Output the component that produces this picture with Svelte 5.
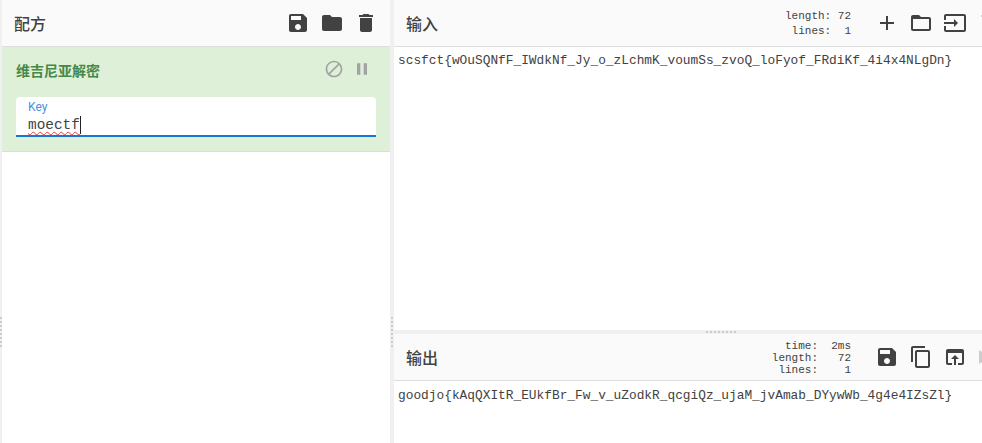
<script>
  const icons = {
    save: "M17 3H5c-1.11 0-2 .9-2 2v14c0 1.1.89 2 2 2h14c1.1 0 2-.9 2-2V7l-4-4zm-5 16c-1.66 0-3-1.34-3-3s1.34-3 3-3 3 1.34 3 3-1.34 3-3 3zm3-10H5V5h10v4z",
    folder: "M10 4H4c-1.1 0-1.99.9-1.99 2L2 18c0 1.1.9 2 2 2h16c1.1 0 2-.9 2-2V8c0-1.1-.9-2-2-2h-8l-2-2z",
    trash: "M6 19c0 1.1.9 2 2 2h8c1.1 0 2-.9 2-2V7H6v12zM19 4h-3.5l-1-1h-5l-1 1H5v2h14V4z",
    add: "M19 13h-6v6h-2v-6H5v-2h6V5h2v6h6v2z",
    folderOpen: "M20 6h-8l-2-2H4c-1.1 0-1.99.9-1.99 2L2 18c0 1.1.9 2 2 2h16c1.1 0 2-.9 2-2V8c0-1.1-.9-2-2-2zm0 12H4V8h16v10z",
    input: "M21 3.01H3c-1.1 0-2 .9-2 2V9h2V4.99h18v14.03H3V15H1v4.01c0 1.1.9 1.98 2 1.98h18c1.1 0 2-.88 2-1.98v-14c0-1.11-.9-2-2-2zM11 16l4-4-4-4v3H1v2h10v3z",
    copy: "M16 1H4c-1.1 0-2 .9-2 2v14h2V3h12V1zm3 4H8c-1.1 0-2 .9-2 2v14c0 1.1.9 2 2 2h11c1.1 0 2-.9 2-2V7c0-1.1-.9-2-2-2zm0 16H8V7h11v14z",
    open: "M19 4H5c-1.11 0-2 .9-2 2v12c0 1.1.89 2 2 2h4v-2H5V8h14v10h-4v2h4c1.1 0 2-.9 2-2V6c0-1.1-.89-2-2-2zm-7 6l-4 4h3v6h2v-6h3l-4-4z",
    block: "M12 2C6.48 2 2 6.48 2 12s4.48 10 10 10 10-4.48 10-10S17.52 2 12 2zM4 12c0-4.42 3.58-8 8-8 1.85 0 3.55.63 4.9 1.69L5.69 16.9C4.63 15.55 4 13.85 4 12zm8 8c-1.85 0-3.55-.63-4.9-1.69L18.31 7.1C19.37 8.45 20 10.15 20 12c0 4.42-3.58 8-8 8z",
    pause: "M6 19h4V5H6v14zm8-14v14h4V5h-4z",
    clear: "M4 4h15v2H4z",
    next: "M2 5v14l11-7z"
  };

  const inputText = "scsfct{wOuSQNfF_IWdkNf_Jy_o_zLchmK_voumSs_zvoQ_loFyof_FRdiKf_4i4x4NLgDn}";
  const outputText = "goodjo{kAqQXItR_EUkfBr_Fw_v_uZodkR_qcgiQz_ujaM_jvAmab_DYywWb_4g4e4IZsZl}";
</script>

{#snippet icon(name, extra = "")}
  <button class="icon-btn {extra}" aria-label={name}>
    <svg viewBox="0 0 24 24" width="24" height="24"><path d={icons[name]} /></svg>
  </button>
{/snippet}

<div class="app">
  <div class="gutter"></div>

  <section class="recipe">
    <header class="bar">
      <h2>配方</h2>
      <div class="buttons">
        {@render icon("save")}
        {@render icon("folder")}
        {@render icon("trash")}
      </div>
    </header>

    <div class="operation">
      <div class="op-head">
        <span class="op-name">维吉尼亚解密</span>
        <div class="op-icons">
          <svg viewBox="0 0 24 24" width="20" height="20"><path d={icons.block} /></svg>
          <svg viewBox="0 0 24 24" width="20" height="20"><path d={icons.pause} /></svg>
        </div>
      </div>
      <div class="field">
        <span class="field-label">Key</span>
        <div class="field-value"><span class="typo">moectf</span><span class="caret"></span></div>
      </div>
    </div>
  </section>

  <div class="gutter"></div>

  <section class="io">
    <div class="pane">
      <header class="bar">
        <h2>输入</h2>
        <pre class="stats in">length: 72
 lines:  1</pre>
        <div class="buttons">
          {@render icon("add")}
          {@render icon("folderOpen")}
          {@render icon("input")}
          {@render icon("clear", "muted")}
        </div>
      </header>
      <div class="text">{inputText}</div>
    </div>

    <div class="h-gutter"></div>

    <div class="pane output">
      <header class="bar">
        <h2>输出</h2>
        <pre class="stats">  time:  2ms
length:   72
 lines:    1</pre>
        <div class="buttons">
          {@render icon("save")}
          {@render icon("copy")}
          {@render icon("open")}
          {@render icon("next", "muted")}
        </div>
      </header>
      <div class="text">{outputText}</div>
    </div>
  </section>
</div>

<style>
  :global(body) {
    margin: 0;
    background: #fff;
    font-family: "Noto Sans CJK SC", "Noto Sans", sans-serif;
  }
  .app {
    display: grid;
    grid-template-columns: 2px 388px 4px 1fr;
    width: 982px;
    height: 443px;
    overflow: hidden;
  }
  .gutter {
    background-color: #f0f0f0;
    background-image: repeating-linear-gradient(to bottom, #ccc 0 2px, transparent 2px 4px);
    background-size: 2px 30px;
    background-position: left 0 top 317px;
    background-repeat: no-repeat;
  }
  .gutter:nth-child(3) {
    background-position: left 1px top 317px;
  }
  .recipe,
  .pane {
    display: flex;
    flex-direction: column;
    min-width: 0;
    overflow: hidden;
  }
  .bar {
    display: flex;
    align-items: center;
    flex: none;
    box-sizing: border-box;
    height: 47px;
    padding-left: 12px;
    background: #fafafa;
    border-bottom: 1px solid #ddd;
  }
  h2 {
    margin: 0;
    font-size: 16px;
    font-weight: 500;
    color: #424242;
    line-height: 24px;
  }
  .buttons {
    display: flex;
    flex: none;
    margin-left: auto;
    margin-right: 7px;
  }
  .stats + .buttons {
    margin-left: 19px;
    margin-right: -24px;
  }
  .icon-btn {
    flex: none;
    display: flex;
    align-items: center;
    justify-content: center;
    width: 34px;
    height: 34px;
    padding: 0;
    border: none;
    background: none;
  }
  .icon-btn path {
    fill: #424242;
  }
  .icon-btn.muted path {
    fill: #ccc;
  }
  .stats {
    margin: 2px 0 0 auto;
    font-family: "Liberation Mono", monospace;
    font-size: 11px;
    line-height: 12px;
    color: #424242;
    white-space: pre;
  }
  .stats.in {
    margin-top: 1px;
    line-height: 15px;
  }
  .operation {
    box-sizing: border-box;
    height: 105px;
    padding: 0 14px;
    background: #dff0d8;
    border-bottom: 1px solid #d3e6cb;
  }
  .op-head {
    display: flex;
    align-items: center;
    justify-content: space-between;
    box-sizing: border-box;
    height: 50px;
    padding-bottom: 4px;
  }
  .op-name {
    font-size: 14px;
    font-weight: 700;
    color: #468847;
  }
  .op-icons {
    display: flex;
    gap: 8px;
    margin: 0 4px 2px 0;
  }
  .op-icons path {
    fill: #a3a3a3;
  }
  .field {
    box-sizing: border-box;
    height: 40px;
    padding: 4px 12px 0;
    background: #fff;
    border-radius: 4px 4px 0 0;
    border-bottom: 2px solid #1976d2;
  }
  .field-label {
    display: block;
    font-family: Roboto, sans-serif;
    font-size: 12px;
    line-height: 13px;
    color: #4a90d9;
  }
  .field-value {
    display: flex;
    align-items: center;
    height: 18px;
    margin-top: 2px;
    font-family: "Liberation Mono", monospace;
    font-size: 14.4px;
    color: #424242;
  }
  .typo {
    text-decoration: underline wavy #e53935 1px;
    text-underline-offset: 2px;
  }
  .caret {
    width: 1px;
    height: 18px;
    background: #222;
  }
  .io {
    display: flex;
    flex-direction: column;
    min-width: 0;
  }
  .pane {
    flex: 1;
  }
  .pane.output {
    flex: none;
    height: 109px;
  }
  .pane.output .text {
    padding-top: 6px;
  }
  .h-gutter {
    flex: none;
    height: 4px;
    background-color: #f0f0f0;
    background-image: repeating-linear-gradient(to right, #ccc 0 2px, transparent 2px 4px);
    background-size: 30px 2px;
    background-position: 312px 1px;
    background-repeat: no-repeat;
  }
  .text {
    padding: 5px 4px;
    font-family: "Liberation Mono", monospace;
    font-size: 12.83px;
    line-height: 17px;
    color: #424242;
    white-space: pre;
  }
</style>
